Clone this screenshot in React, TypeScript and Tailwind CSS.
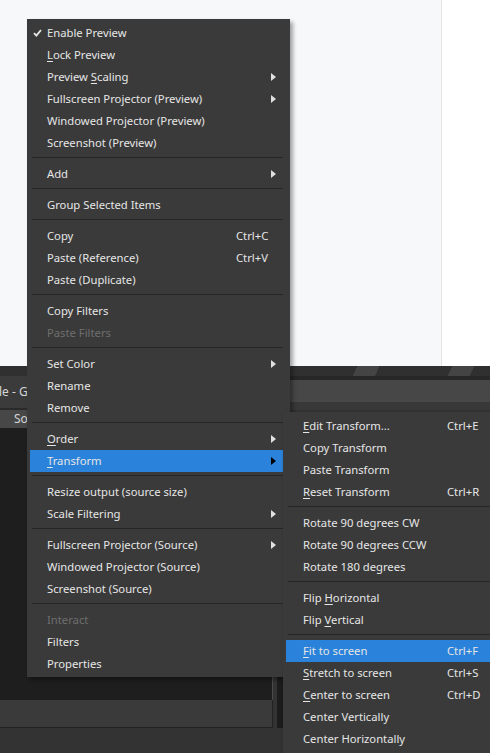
import React from "react";

type Item =
  | { sep: true }
  | {
      sep?: false;
      label: string;
      u?: number; // index of underlined letter
      keys?: string;
      sub?: boolean;
      check?: boolean;
      off?: boolean;
      on?: boolean;
    };

const mainItems: Item[] = [
  { label: "Enable Preview", check: true },
  { label: "Lock Preview", u: 0 },
  { label: "Preview Scaling", u: 8, sub: true },
  { label: "Fullscreen Projector (Preview)", sub: true },
  { label: "Windowed Projector (Preview)" },
  { label: "Screenshot (Preview)" },
  { sep: true },
  { label: "Add", sub: true },
  { sep: true },
  { label: "Group Selected Items" },
  { sep: true },
  { label: "Copy", keys: "Ctrl+C" },
  { label: "Paste (Reference)", keys: "Ctrl+V" },
  { label: "Paste (Duplicate)" },
  { sep: true },
  { label: "Copy Filters" },
  { label: "Paste Filters", off: true },
  { sep: true },
  { label: "Set Color", sub: true },
  { label: "Rename" },
  { label: "Remove" },
  { sep: true },
  { label: "Order", u: 0, sub: true },
  { label: "Transform", u: 0, sub: true, on: true },
  { sep: true },
  { label: "Resize output (source size)" },
  { label: "Scale Filtering", sub: true },
  { sep: true },
  { label: "Fullscreen Projector (Source)", sub: true },
  { label: "Windowed Projector (Source)" },
  { label: "Screenshot (Source)" },
  { sep: true },
  { label: "Interact", off: true },
  { label: "Filters" },
  { label: "Properties" },
];

const transformItems: Item[] = [
  { label: "Edit Transform...", u: 0, keys: "Ctrl+E" },
  { label: "Copy Transform" },
  { label: "Paste Transform" },
  { label: "Reset Transform", u: 0, keys: "Ctrl+R" },
  { sep: true },
  { label: "Rotate 90 degrees CW" },
  { label: "Rotate 90 degrees CCW" },
  { label: "Rotate 180 degrees" },
  { sep: true },
  { label: "Flip Horizontal", u: 5 },
  { label: "Flip Vertical", u: 5 },
  { sep: true },
  { label: "Fit to screen", u: 0, keys: "Ctrl+F", on: true },
  { label: "Stretch to screen", u: 0, keys: "Ctrl+S" },
  { label: "Center to screen", u: 0, keys: "Ctrl+D" },
  { label: "Center Vertically" },
  { label: "Center Horizontally" },
];

function Label({ text, u }: { text: string; u?: number }) {
  if (u === undefined) return <>{text}</>;
  return (
    <>
      {text.slice(0, u)}
      <span className="underline underline-offset-[2px]">{text[u]}</span>
      {text.slice(u + 1)}
    </>
  );
}

function Menu({ items, labelW }: { items: Item[]; labelW: string }) {
  return (
    <div className="flex flex-col">
      {items.map((it, i) =>
        it.sep ? (
          <div key={i} className="h-[9px] pt-[3px] pl-[2px]">
            <div className="h-px bg-[#262626]" />
          </div>
        ) : (
          <div
            key={i}
            className={`flex h-[22px] items-center pr-[7px] ${
              it.on ? "bg-[#2a82da]" : ""
            } ${it.off ? "text-[#6e6e6e]" : "text-[#e6e6e6]"}`}
          >
            <div className="w-[17px] pl-[3px]">
              {it.check && (
                <svg width="9" height="8" viewBox="0 0 9 8">
                  <path d="M1 4.2 L3.4 6.6 L8 1" fill="none" stroke="#e6e6e6" strokeWidth="1.9" />
                </svg>
              )}
            </div>
            <div className={`${labelW} whitespace-nowrap pt-[1px]`}>
              <Label text={it.label} u={it.u} />
            </div>
            {it.keys && <div className="whitespace-nowrap pt-[1px]">{it.keys}</div>}
            {it.sub && (
              <svg className="ml-auto" width="5" height="8" viewBox="0 0 5 8">
                <polygon points="0,0 5,4 0,8" fill={it.on ? "#000000" : "#e0e0e0"} />
              </svg>
            )}
          </div>
        )
      )}
    </div>
  );
}

export default function App() {
  return (
    <div className="relative h-[753px] w-[490px] overflow-hidden bg-[#333333] font-['Noto_Sans',sans-serif] text-[11.25px]">
      {/* browser page behind */}
      <div className="flex h-[366px]">
        <div className="flex-1 border-r border-[#e4e4e4] bg-[#f7f8fa]" />
        <div className="w-[48px] bg-white" />
      </div>

      {/* obs window */}
      <div className="h-[10px] bg-[repeating-linear-gradient(115deg,#303030_0px,#303030_66px,#444444_66px,#444444_86px)]" />
      <div className="flex h-[34px]">
        <div className="w-[290px] border-b-2 border-[#2a2a2a] bg-[#3b3b3b]">
          <div className="flex h-full w-[27px] items-center overflow-hidden text-[12px] text-[#d6d6d6]">
            <span className="-ml-[1px] whitespace-nowrap">le - Go</span>
          </div>
        </div>
        <div className="flex flex-1 flex-col">
          <div className="h-[4px] bg-[#272727]" />
          <div className="h-[22px] bg-[#474747]" />
          <div className="flex-1 bg-[#383838]" />
        </div>
      </div>
      <div className="h-[18px] w-[283px] bg-[#474747]">
        <div className="flex h-full w-[27px] items-center overflow-hidden pl-[14px] text-[12px] text-[#d6d6d6]">
          <span className="whitespace-nowrap">So</span>
        </div>
      </div>
      <div className="flex h-[272px]">
        <div className="w-[272px] bg-[#1e1e1e]" />
        <div className="w-[5px] border-l border-[#4a4a4a] bg-[#333333]" />
        <div className="w-[6px] bg-[#1c1c1c]" />
      </div>
      <div className="flex h-[28px]">
        <div className="w-[273px] border-r border-b border-[#222222] bg-[#3a3a3a]" />
        <div className="w-[4px] bg-[#333333]" />
        <div className="w-[6px] bg-[#1c1c1c]" />
      </div>

      {/* context menu */}
      <div className="absolute top-[19px] left-[27px] w-[263px] bg-[#3a3a3a] pt-[3px] pr-[7px] pb-[2px] pl-[3px] shadow-[3px_3px_4px_rgba(0,0,0,0.35)]">
        <Menu items={mainItems} labelW="w-[189px]" />
      </div>

      {/* transform submenu */}
      <div className="absolute top-[412px] left-[283px] w-[240px] bg-[#3a3a3a] pt-[3px] pr-[7px] pb-[3px] pl-[3px] shadow-[2px_2px_4px_rgba(0,0,0,0.35)]">
        <Menu items={transformItems} labelW="w-[144px]" />
      </div>
    </div>
  );
}
